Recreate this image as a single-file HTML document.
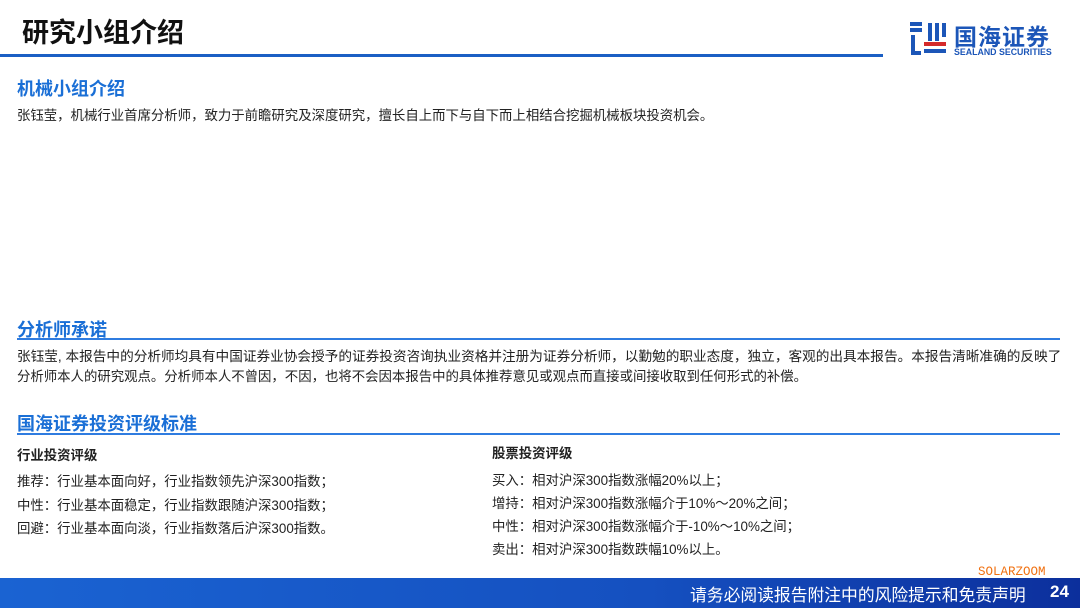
<!DOCTYPE html>
<html><head><meta charset="utf-8"><style>
*{margin:0;padding:0;box-sizing:border-box}
body{width:1080px;height:608px;background:#fff;position:relative;overflow:hidden;font-family:"Liberation Sans","Noto Sans CJK SC",sans-serif;color:#222}
.a{position:absolute;white-space:nowrap}
.h{color:#1a6fd6;font-size:18px;font-weight:bold}
.line{position:absolute;height:2px;background:#2f7ce0;left:17px;width:1043px}
.t{font-size:13.4px;color:#222}
</style></head><body>
<div class="a" style="left:22px;top:11px;font-size:27px;font-weight:bold;color:#111">研究小组介绍</div>
<div style="position:absolute;left:0;top:54px;width:883px;height:3px;background:#1b5fc4"></div>
<svg class="a" style="left:908px;top:20px" width="40" height="38" viewBox="0 0 40 38">
<path d="M2 4h12M2 10h12M5 15v18h8" stroke="#1c56b8" stroke-width="4" fill="none"/>
<path d="M22 3v18M29 3v18M36 3v14" stroke="#1c56b8" stroke-width="4" fill="none"/>
<rect x="16" y="22" width="22" height="4" fill="#d42a2a"/>
<rect x="16" y="29" width="22" height="4" fill="#1c56b8"/>
</svg>
<div class="a" style="left:954px;top:18px;font-size:23px;font-weight:bold;color:#1c56b8;letter-spacing:1px">国海证券</div>
<div class="a" style="left:954px;top:47px;font-size:8.8px;font-weight:bold;color:#1c56b8">SEALAND SECURITIES</div>

<div class="a h" style="left:17px;top:75px">机械小组介绍</div>
<div class="a t" style="left:17px;top:104px">张钰莹，机械行业首席分析师，致力于前瞻研究及深度研究，擅长自上而下与自下而上相结合挖掘机械板块投资机会。</div>

<div class="a h" style="left:17px;top:316px">分析师承诺</div>
<div class="line" style="top:338px"></div>
<div class="a t" style="left:17px;top:345px;font-size:13.65px">张钰莹, 本报告中的分析师均具有中国证券业协会授予的证券投资咨询执业资格并注册为证券分析师，以勤勉的职业态度，独立，客观的出具本报告。本报告清晰准确的反映了</div>
<div class="a t" style="left:17px;top:365px">分析师本人的研究观点。分析师本人不曾因，不因，也将不会因本报告中的具体推荐意见或观点而直接或间接收取到任何形式的补偿。</div>

<div class="a h" style="left:17px;top:410px">国海证券投资评级标准</div>
<div class="line" style="top:433px"></div>
<div class="a t" style="left:17px;top:444px;font-weight:bold">行业投资评级</div>
<div class="a t" style="left:17px;top:470px">推荐：行业基本面向好，行业指数领先沪深300指数；</div>
<div class="a t" style="left:17px;top:494px">中性：行业基本面稳定，行业指数跟随沪深300指数；</div>
<div class="a t" style="left:17px;top:517px">回避：行业基本面向淡，行业指数落后沪深300指数。</div>
<div class="a t" style="left:492px;top:442px;font-weight:bold">股票投资评级</div>
<div class="a t" style="left:492px;top:469px">买入：相对沪深300指数涨幅20%以上；</div>
<div class="a t" style="left:492px;top:492px">增持：相对沪深300指数涨幅介于10%～20%之间；</div>
<div class="a t" style="left:492px;top:515px">中性：相对沪深300指数涨幅介于-10%～10%之间；</div>
<div class="a t" style="left:492px;top:538px">卖出：相对沪深300指数跌幅10%以上。</div>

<div class="a" style="left:978px;top:565px;font-size:12.5px;color:#f07010;font-family:'Liberation Mono',monospace">SOLARZOOM</div>
<div style="position:absolute;left:0;top:578px;width:1080px;height:30px;background:linear-gradient(90deg,#1a63d2,#1550c0 60%,#0c2f9c)"></div>
<div class="a" style="left:690px;top:582px;font-size:16.8px;color:#fff">请务必阅读报告附注中的风险提示和免责声明</div>
<div class="a" style="left:1050px;top:582px;font-size:17px;color:#fff;font-weight:bold">24</div>
</body></html>
